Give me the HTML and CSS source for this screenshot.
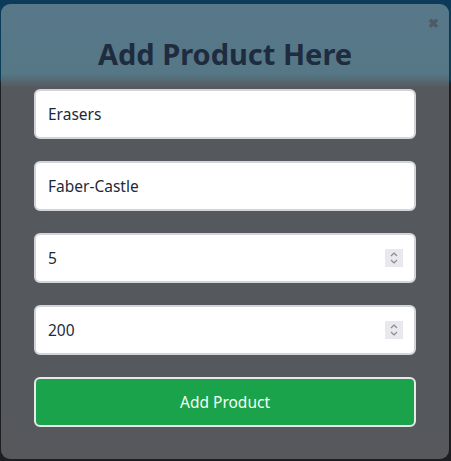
FILE: index.html
```html
<!DOCTYPE html>
<html>
<head>
<meta charset="utf-8">
<link rel="stylesheet" href="styles.css">
</head>
<body>
<div class="page">
  <div class="modal">
    <button class="close" type="button">&#10006;</button>
    <h1 class="title">Add Product Here</h1>
    <form class="form">
      <div class="field"><input class="input" type="text" value="Erasers"></div>
      <div class="field"><input class="input" type="text" value="Faber-Castle"></div>
      <div class="field">
        <input class="input" type="text" value="5">
        <span class="spin"><svg width="10" height="14" viewBox="0 0 10 14"><path d="M2 5 L5 2 L8 5 M2 9 L5 12 L8 9" fill="none" stroke="#8a8a92" stroke-width="1.2"/></svg></span>
      </div>
      <div class="field">
        <input class="input" type="text" value="200">
        <span class="spin"><svg width="10" height="14" viewBox="0 0 10 14"><path d="M2 5 L5 2 L8 5 M2 9 L5 12 L8 9" fill="none" stroke="#8a8a92" stroke-width="1.2"/></svg></span>
      </div>
      <button class="submit" type="button">Add Product</button>
    </form>
  </div>
</div>
</body>
</html>
```

FILE: styles.css
```css
html, body {
  margin: 0;
  padding: 0;
}
body {
  width: 451px;
  height: 461px;
  overflow: hidden;
  font-family: "Noto Sans", "Open Sans", sans-serif;
  background: linear-gradient(to bottom, #0c3a5a 0px, #0c3d55 80px, #1c1e22 84px, #1c1e22 100%);
}
.page {
  padding: 4px 2px 2px 1px;
  height: 455px;
}
.modal {
  position: relative;
  height: 455px;
  box-sizing: border-box;
  border-radius: 9px;
  background: linear-gradient(to bottom, #587889 0px, #557786 70px, #55585c 84px, #56585c 100%);
  padding: 0 33px;
}
.close {
  position: absolute;
  top: 13px;
  right: 10px;
  border: 0;
  background: none;
  padding: 0;
  color: #4e5a66;
  font-size: 13px;
  font-weight: bold;
  line-height: 14px;
}
.title {
  margin: 0;
  padding-top: 30px;
  height: 55px;
  text-align: center;
  font-size: 29px;
  line-height: 40px;
  font-weight: bold;
  color: #1f2b3e;
}
.form {
  display: flex;
  flex-direction: column;
  gap: 22px;
}
.field {
  position: relative;
}
.input {
  display: block;
  width: 100%;
  height: 50px;
  box-sizing: border-box;
  border: 2px solid #d2d4da;
  border-radius: 6px;
  background: #ffffff;
  padding: 0 12px;
  font-family: inherit;
  font-size: 15.5px;
  color: #1e2a3a;
  outline: none;
}
.spin {
  position: absolute;
  right: 13px;
  top: 16px;
  width: 18px;
  height: 18px;
  background: #e8e8ed;
  display: flex;
  align-items: center;
  justify-content: center;
}
.submit {
  height: 50px;
  border: 2px solid #e6e8ea;
  border-radius: 6px;
  background: #1aa34a;
  color: #f4fff6;
  font-family: inherit;
  font-size: 15.5px;
}
```
